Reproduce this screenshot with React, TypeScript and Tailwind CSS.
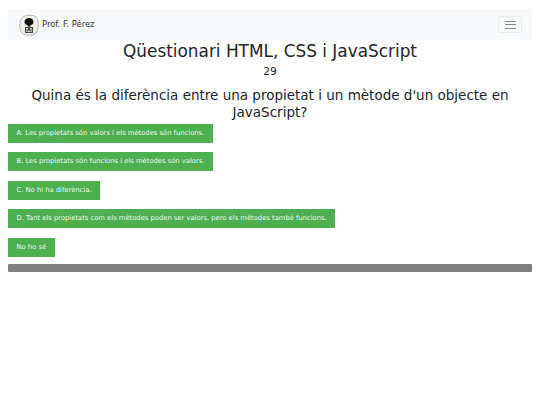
const opts = [
  "A. Les propietats són valors i els mètodes són funcions.",
  "B. Les propietats són funcions i els mètodes són valors.",
  "C. No hi ha diferència.",
  "D. Tant els propietats com els mètodes poden ser valors, pero els mètodes també funcions.",
  "No ho sé",
];

export default function App() {
  return (
    <div className="px-2 pt-[9px] font-['DejaVu_Sans',sans-serif] text-[#212529] bg-white min-h-[405px]">
      <nav className="h-[31px] bg-[#f8f9fa] flex items-center justify-between pl-[11px] pr-[10px]">
        <div className="flex items-center gap-[3px]">
          <svg width="20" height="22" viewBox="0 0 20 22">
            <path d="M3 4 C6 0.5 14 0.5 17 3 C20 6 20 15 17 19 C13 22 6 22 3 19 C0 15 0 8 3 4Z" fill="#f3f0ea" stroke="#8a8a8a" strokeWidth="0.6" />
            <path d="M5.5 8 C5.5 2.5 14.5 2.5 14.5 8 C14.5 10 13 11 11.5 11 L11.5 12.5 L8.5 12.5 L8.5 11 C7 11 5.5 10 5.5 8Z" fill="#111" />
            <rect x="6" y="13" width="8" height="6" fill="#444" />
            <rect x="7" y="14" width="2" height="1.5" fill="#ddd" />
            <rect x="11" y="14" width="2" height="1.5" fill="#ddd" />
            <rect x="7" y="16.5" width="6" height="1.5" fill="#bbb" />
          </svg>
          <span className="text-[8.4px] leading-none text-[#333]">Prof. F. Pérez</span>
        </div>
        <button className="w-[24px] h-[17px] border border-[#e9eaeb] rounded-[2.5px] flex flex-col items-center justify-center gap-[2.5px]">
          <span className="block w-[11px] h-px bg-[#8a8b8c]" />
          <span className="block w-[11px] h-px bg-[#8a8b8c]" />
          <span className="block w-[11px] h-px bg-[#8a8b8c]" />
        </button>
      </nav>
      <h1 className="text-center text-[16.9px] leading-[22px] font-normal">Qüestionari HTML, CSS i JavaScript</h1>
      <p className="text-center text-[10.7px] leading-[16px] mt-[1.5px]">29</p>
      <h2 className="text-center text-[13.5px] leading-[16.5px] mt-[7.5px] font-normal">
        Quina és la diferència entre una propietat i un mètode d'un objecte en JavaScript?
      </h2>
      <div className="mt-[3.6px] flex flex-col items-start gap-[9.6px]">
        {opts.map((o) => (
          <button key={o} className="h-[19px] px-[8.5px] bg-[#4caf50] text-[#f2f9f2] text-[6.78px] leading-none whitespace-nowrap">
            {o}
          </button>
        ))}
      </div>
      <div className="mt-[6.8px] h-2 rounded-[1px] bg-[#808080]" />
    </div>
  );
}
